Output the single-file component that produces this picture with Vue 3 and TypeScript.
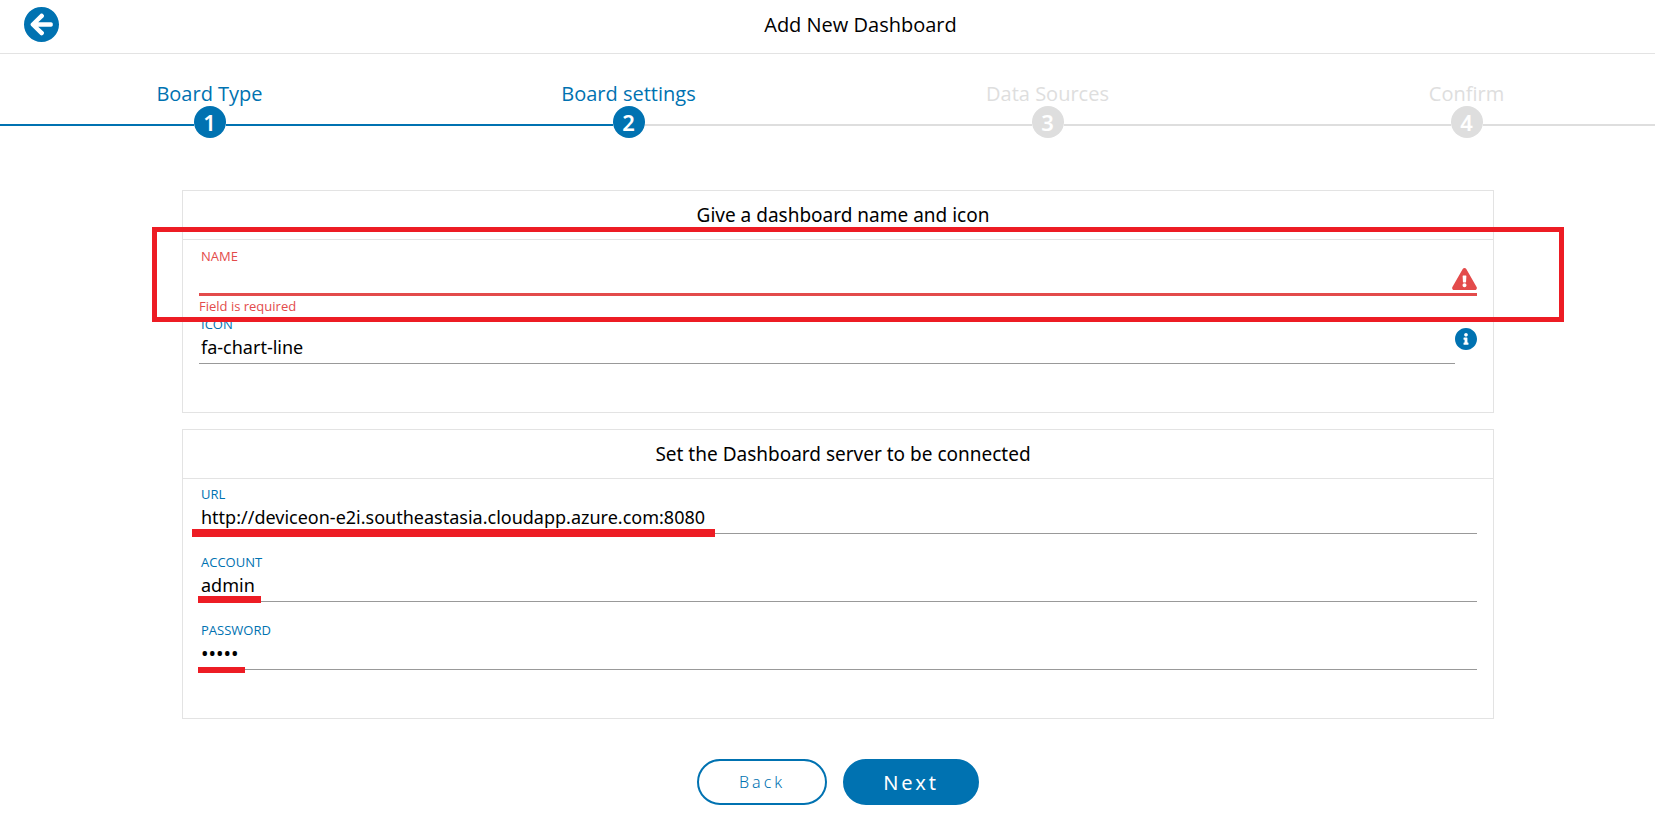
<script setup lang="ts">
import { reactive, ref } from 'vue'

interface Step {
  label: string
  before: boolean
  after: boolean
  active: boolean
}

const steps: Step[] = [
  { label: 'Board Type', active: true, before: true, after: true },
  { label: 'Board settings', active: true, before: true, after: false },
  { label: 'Data Sources', active: false, before: false, after: false },
  { label: 'Confirm', active: false, before: false, after: false },
]

const board = reactive({ name: '', icon: 'fa-chart-line' })

interface ServerField {
  id: string
  label: string
  type: string
  mark: string
}

const server = ref<Record<string, string>>({
  url: 'http://deviceon-e2i.southeastasia.cloudapp.azure.com:8080',
  account: 'admin',
  password: 'admin',
})

const serverFields: ServerField[] = [
  { id: 'url', label: 'URL', type: 'text', mark: 'mark-url' },
  { id: 'account', label: 'ACCOUNT', type: 'text', mark: 'mark-account' },
  { id: 'password', label: 'PASSWORD', type: 'password', mark: 'mark-password' },
]
</script>

<template>
  <div class="viewport">
    <div class="page">
      <header class="topbar">
        <button class="icon-button" type="button" aria-label="Go back">
          <svg class="back-icon" viewBox="8 8 496 496" aria-hidden="true">
            <path d="M256 504C119 504 8 393 8 256S119 8 256 8s248 111 248 248-111 248-248 248zm28.9-143.6L209.4 288H392c13.3 0 24-10.7 24-24v-16c0-13.3-10.7-24-24-24H209.4l75.5-72.4c9.7-9.3 9.9-24.8.4-34.3l-11-10.9c-9.4-9.4-24.6-9.4-33.9 0L107.7 239c-9.4 9.4-9.4 24.6 0 33.9l132.7 132.7c9.4 9.4 24.6 9.4 33.9 0l11-10.9c9.5-9.5 9.3-25-.4-34.3z" />
          </svg>
        </button>
        <h1 class="title">Add New Dashboard</h1>
      </header>

      <ol class="steps">
        <li v-for="(step, i) in steps" :key="step.label" class="step" :class="{ active: step.active }">
          <span class="step-label">{{ step.label }}</span>
          <span class="track">
            <span class="line" :class="{ done: step.before }"></span>
            <span class="circle">{{ i + 1 }}</span>
            <span class="line" :class="{ done: step.after }"></span>
          </span>
        </li>
      </ol>

      <form class="content" @submit.prevent>
        <section class="card">
          <h2 class="card-title">Give a dashboard name and icon</h2>
          <div class="card-body">
            <div class="field invalid">
              <label for="name">NAME</label>
              <div class="control">
                <input id="name" v-model="board.name" type="text" aria-describedby="name-error" />
                <svg class="warning-icon" viewBox="0 0 576 512" aria-hidden="true">
                  <path d="M569.517 440.013C587.975 472.007 564.806 512 527.94 512H48.054c-36.937 0-59.999-40.055-41.577-71.987L246.423 23.985c18.467-32.009 64.72-31.951 83.154 0l239.94 416.028zM288 354c-25.405 0-46 20.595-46 46s20.595 46 46 46 46-20.595 46-46-20.595-46-46-46zm-43.673-165.346l7.418 136c.347 6.364 5.609 11.346 11.982 11.346h48.546c6.373 0 11.635-4.982 11.982-11.346l7.418-136c.375-6.874-5.098-12.654-11.982-12.654h-63.383c-6.884 0-12.356 5.78-11.981 12.654z" />
                </svg>
              </div>
              <p id="name-error" class="hint">Field is required</p>
            </div>
            <div class="with-info">
              <div class="field">
                <label for="icon">ICON</label>
                <div class="control">
                  <input id="icon" v-model="board.icon" type="text" />
                </div>
                <p class="hint"></p>
              </div>
              <button class="icon-button info" type="button" aria-label="Icon help">
                <svg class="info-icon" viewBox="8 8 496 496" aria-hidden="true">
                  <path d="M256 8C119.043 8 8 119.083 8 256c0 136.997 111.043 248 248 248s248-111.003 248-248C504 119.083 392.957 8 256 8zm0 110c23.196 0 42 18.804 42 42s-18.804 42-42 42-42-18.804-42-42 18.804-42 42-42zm56 254c0 6.627-5.373 12-12 12h-88c-6.627 0-12-5.373-12-12v-24c0-6.627 5.373-12 12-12h12v-64h-12c-6.627 0-12-5.373-12-12v-24c0-6.627 5.373-12 12-12h64c6.627 0 12 5.373 12 12v100h12c6.627 0 12 5.373 12 12v24z" />
                </svg>
              </button>
            </div>
          </div>
          <span class="mark-frame" aria-hidden="true"></span>
        </section>

        <section class="card">
          <h2 class="card-title">Set the Dashboard server to be connected</h2>
          <div class="card-body">
            <div v-for="f in serverFields" :key="f.id" class="field">
              <label :for="f.id">{{ f.label }}</label>
              <div class="control">
                <input :id="f.id" v-model="server[f.id]" :type="f.type" />
                <span class="mark" :class="f.mark" aria-hidden="true"></span>
              </div>
              <p class="hint"></p>
            </div>
          </div>
        </section>

        <div class="actions">
          <button class="pill outline" type="button">Back</button>
          <button class="pill solid" type="submit">Next</button>
        </div>
      </form>
    </div>
  </div>
</template>

<style>
body {
  margin: 0;
  background: #fff;
}
</style>

<style scoped>
.viewport {
  overflow: hidden;
  font-family: 'Noto Sans', 'Open Sans', sans-serif;
  font-size: 18px;
  color: #000;
}

.page {
  width: calc(100% + 21px);
}

.topbar {
  display: flex;
  align-items: center;
  box-sizing: border-box;
  height: 54px;
  padding: 0 14px 4px 24px;
  border-bottom: 1px solid #e3e3e3;
}

.icon-button {
  display: flex;
  padding: 0;
  border: 0;
  background: none;
  color: #0072b1;
  cursor: pointer;
}

svg {
  display: block;
  fill: currentColor;
}

.back-icon {
  width: 35px;
  height: 35px;
}

.title,
.card-title {
  margin: 0;
  font-size: 19px;
  font-weight: 400;
  text-align: center;
}

.title {
  flex: 1;
  font-family: 'Open Sans', sans-serif;
  font-size: 20px;
}

.steps {
  display: flex;
  margin: 0;
  padding: 27px 0 0;
  list-style: none;
}

.step {
  flex: 1;
  color: #dedede;
  text-align: center;
}

.step.active {
  color: #0072b1;
}

.step-label {
  display: block;
  font-family: 'Open Sans', sans-serif;
  font-size: 20px;
  font-weight: 500;
  line-height: 25px;
}

.track {
  display: flex;
  align-items: center;
}

.line {
  flex: 1;
  height: 2px;
  margin-top: 6px;
  background: #dedede;
}

.line.done {
  background: #0072b1;
}

.circle {
  width: 32px;
  height: 32px;
  border-radius: 50%;
  background: currentColor;
  font-size: 22px;
  font-weight: 600;
  line-height: 32px;
}

.circle::first-line {
  color: #fff;
}

.content {
  display: flex;
  flex-direction: column;
  gap: 16px;
  padding: 52px 182px 32px;
}

.card {
  position: relative;
  border: 1px solid #e3e3e3;
}

.card-title {
  padding-left: 10px;
  border-bottom: 1px solid #e3e3e3;
  line-height: 48px;
}

.card-body {
  padding: 8px 16px 27px;
}

.field {
  flex: 1;
  color: #0072b1;
}

.field label {
  display: block;
  padding: 0 2px 2px;
  font-family: 'Open Sans', sans-serif;
  font-size: 13px;
  line-height: 14px;
}

.control {
  position: relative;
  display: flex;
}

.field input {
  flex: 1;
  box-sizing: border-box;
  min-width: 0;
  height: 31px;
  padding: 0 2px 2px;
  border: 0;
  border-bottom: 1px solid #999;
  border-radius: 0;
  outline: 0;
  background: none;
  color: #000;
  font: inherit;
}

.field input[type='password'] {
  font-size: 20px;
}

.field.invalid {
  padding-top: 1px;
  color: #e34b4b;
}

.field.invalid input {
  border-bottom: 3px solid #e34b4b;
}

.warning-icon {
  position: absolute;
  right: 0;
  bottom: 6px;
  width: 25px;
  height: 22px;
}

.hint {
  min-height: 21px;
  margin: 0;
  font-family: 'Open Sans', sans-serif;
  font-size: 13px;
  line-height: 21px;
}

.with-info {
  display: flex;
  align-items: flex-start;
}

.info {
  padding-top: 11px;
}

.info-icon {
  width: 22px;
  height: 22px;
}

.actions {
  display: flex;
  justify-content: center;
  gap: 16px;
  padding-top: 24px;
}

.pill {
  height: 46px;
  padding: 0 38px;
  border: 2px solid #0072b1;
  border-radius: 23px;
  font-family: inherit;
  letter-spacing: 3px;
  cursor: pointer;
}

.outline {
  padding: 0 40px;
  background: #fff;
  color: #0072b1;
  font-size: 16px;
  font-weight: 300;
}

.solid {
  background: #0072b1;
  color: #fff;
  font-size: 20px;
}

/* Red highlights drawn over the form */
.mark-frame {
  position: absolute;
  top: 36px;
  right: -71px;
  left: -31px;
  box-sizing: border-box;
  height: 95px;
  border: 5px solid #ed1c24;
  pointer-events: none;
}

.mark {
  position: absolute;
  left: -1px;
  background: #ed1c24;
}

.mark-url {
  bottom: -3px;
  left: -7px;
  width: 523px;
  height: 8px;
}

.mark-account {
  bottom: -1px;
  width: 63px;
  height: 7px;
}

.mark-password {
  bottom: -3px;
  width: 47px;
  height: 6px;
}
</style>
